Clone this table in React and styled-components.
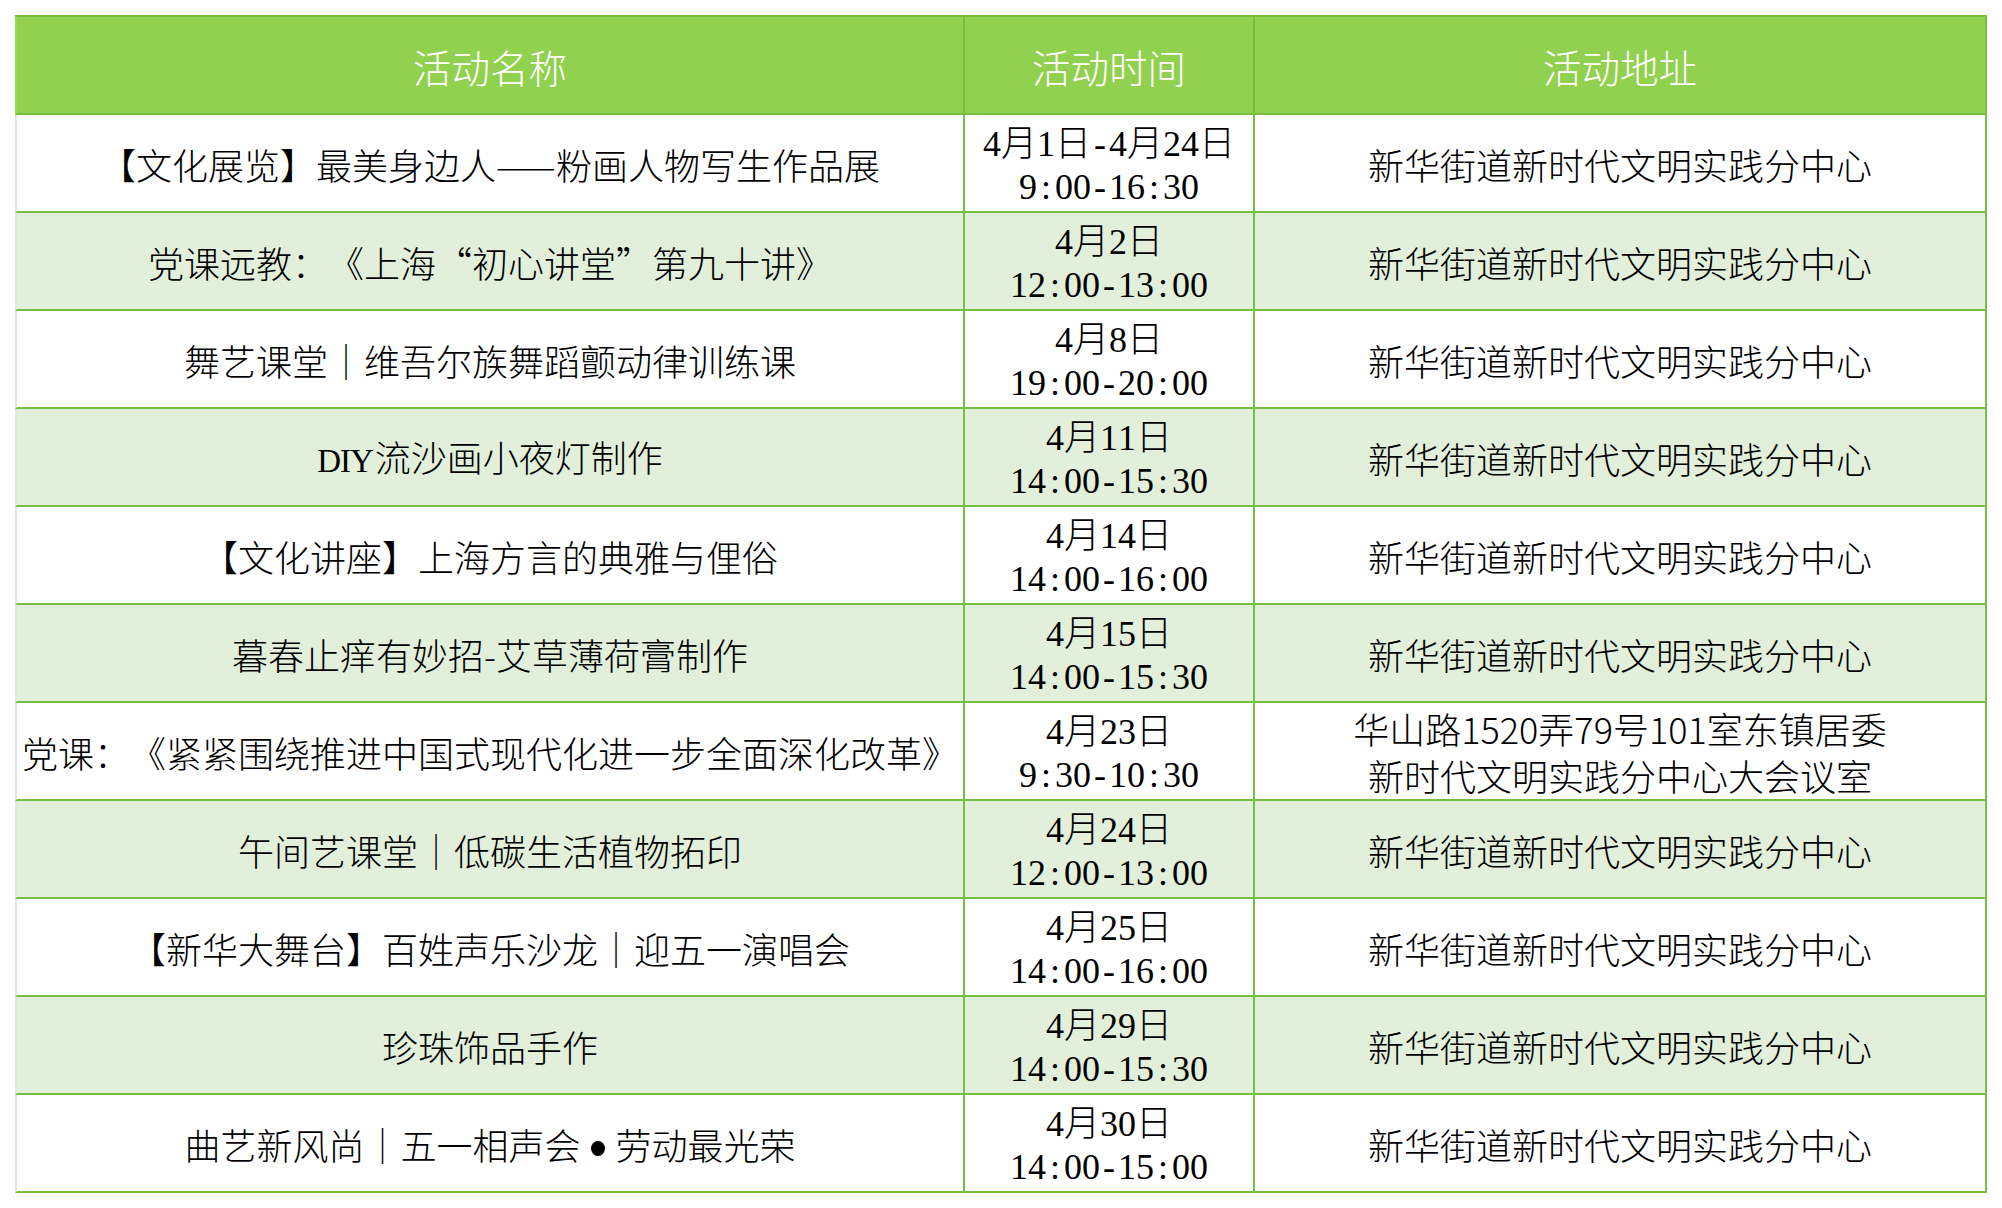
import React from "react";
import styled, { createGlobalStyle } from "styled-components";

const GlobalStyle = createGlobalStyle`
  html, body {
    margin: 0;
    padding: 0;
    background: #ffffff;
  }
  body {
    font-family: "Noto Sans CJK SC", "Liberation Sans", sans-serif;
    text-spacing-trim: space-all;
  }
`;

const Page = styled.div`
  padding: 15px 0 0 15px;
`;

const Grid = styled.div`
  display: grid;
  grid-template-columns: 950px 290px 732px;
  width: 1972px;
  border-top: 2px solid #77be44;
  box-sizing: border-box;
`;

const HeadCell = styled.div`
  box-sizing: border-box;
  height: 98px;
  background: #92d050;
  color: #ffffff;
  font-family: "Noto Sans CJK SC", sans-serif;
  font-weight: 300;
  font-size: 38.5px;
  display: flex;
  align-items: center;
  justify-content: center;
  padding-top: 2px;
  border-right: 2px solid #77be44;
  border-bottom: 2px solid #77be44;
  border-left: ${(p) => (p.$first ? "2px solid #9cd55c" : "none")};
`;

const Cell = styled.div`
  box-sizing: border-box;
  height: 98px;
  background: ${(p) => (p.$alt ? "#e2efda" : "#ffffff")};
  color: #000000;
  display: flex;
  flex-direction: column;
  align-items: center;
  justify-content: center;
  text-align: center;
  white-space: nowrap;
  padding-top: ${(p) => p.$shift || 0}px;
  border-right: 2px solid #77be44;
  border-bottom: 2px solid #77be44;
  border-left: ${(p) => (p.$first ? "2px solid #e4e4e4" : "none")};
`;

const NameText = styled.div`
  font-family: "Noto Sans CJK SC", sans-serif;
  font-weight: 300;
  font-size: 36px;
  line-height: 44px;
  padding-top: 2px;
  text-spacing-trim: space-all;
`;

const Latin = styled.span`
  font-family: "Liberation Serif", serif;
  font-size: 33px;
  letter-spacing: -1px;
  margin-right: 2px;
`;

const Bullet = styled.span`
  display: inline-block;
  width: 14px;
  height: 15px;
  border-radius: 50%;
  background: #000000;
  margin: 0 11px 0 10px;
  vertical-align: middle;
  position: relative;
  top: -2px;
`;

const TimeLine = styled.div`
  font-family: "Liberation Serif", "Noto Sans CJK SC", serif;
  font-size: 36px;
  line-height: 43px;
`;

const Glyph = styled.span`
  display: inline-block;
  width: ${(p) => (p.$wide ? "1em" : "0.5em")};
  text-align: center;
  font-weight: ${(p) => (p.$wide ? 300 : 400)};
`;

const AddrText = styled.div`
  font-family: "Noto Sans CJK SC", sans-serif;
  font-weight: 300;
  font-size: 36px;
  line-height: 45px;
  padding-top: 2px;
`;

function SongLine({ text }) {
  return (
    <TimeLine>
      {Array.from(text).map((ch, i) => (
        <Glyph key={i} $wide={ch.charCodeAt(0) > 255}>
          {ch}
        </Glyph>
      ))}
    </TimeLine>
  );
}

const DEFAULT_ADDR = ["新华街道新时代文明实践分中心"];

const rows = [
  {
    name: "【文化展览】最美身边人——粉画人物写生作品展",
    date: "4月1日-4月24日",
    time: "9:00-16:30",
  },
  {
    name: "党课远教：《上海“初心讲堂”第九十讲》",
    date: "4月2日",
    time: "12:00-13:00",
  },
  {
    name: "舞艺课堂｜维吾尔族舞蹈颤动律训练课",
    date: "4月8日",
    time: "19:00-20:00",
  },
  {
    name: (
      <>
        <Latin>DIY</Latin>流沙画小夜灯制作
      </>
    ),
    date: "4月11日",
    time: "14:00-15:30",
  },
  {
    name: "【文化讲座】上海方言的典雅与俚俗",
    date: "4月14日",
    time: "14:00-16:00",
  },
  {
    name: "暮春止痒有妙招-艾草薄荷膏制作",
    date: "4月15日",
    time: "14:00-15:30",
  },
  {
    name: "党课：《紧紧围绕推进中国式现代化进一步全面深化改革》",
    date: "4月23日",
    time: "9:30-10:30",
    addr: ["华山路1520弄79号101室东镇居委", "新时代文明实践分中心大会议室"],
  },
  {
    name: "午间艺课堂｜低碳生活植物拓印",
    date: "4月24日",
    time: "12:00-13:00",
  },
  {
    name: "【新华大舞台】百姓声乐沙龙｜迎五一演唱会",
    date: "4月25日",
    time: "14:00-16:00",
  },
  {
    name: "珍珠饰品手作",
    date: "4月29日",
    time: "14:00-15:30",
  },
  {
    name: (
      <>
        曲艺新风尚｜五一相声会<Bullet />劳动最光荣
      </>
    ),
    date: "4月30日",
    time: "14:00-15:00",
  },
];

export default function App() {
  return (
    <>
      <GlobalStyle />
      <Page>
        <Grid>
          <HeadCell $first>活动名称</HeadCell>
          <HeadCell>活动时间</HeadCell>
          <HeadCell>活动地址</HeadCell>
          {rows.map((r, i) => {
            const alt = i % 2 === 1;
            const addr = r.addr || DEFAULT_ADDR;
            return (
              <React.Fragment key={i}>
                <Cell $first $alt={alt}>
                  <NameText>{r.name}</NameText>
                </Cell>
                <Cell $alt={alt} $shift={5}>
                  <SongLine text={r.date} />
                  <SongLine text={r.time} />
                </Cell>
                <Cell $alt={alt}>
                  {addr.map((a, j) => (
                    <AddrText key={j}>{a}</AddrText>
                  ))}
                </Cell>
              </React.Fragment>
            );
          })}
        </Grid>
      </Page>
    </>
  );
}
